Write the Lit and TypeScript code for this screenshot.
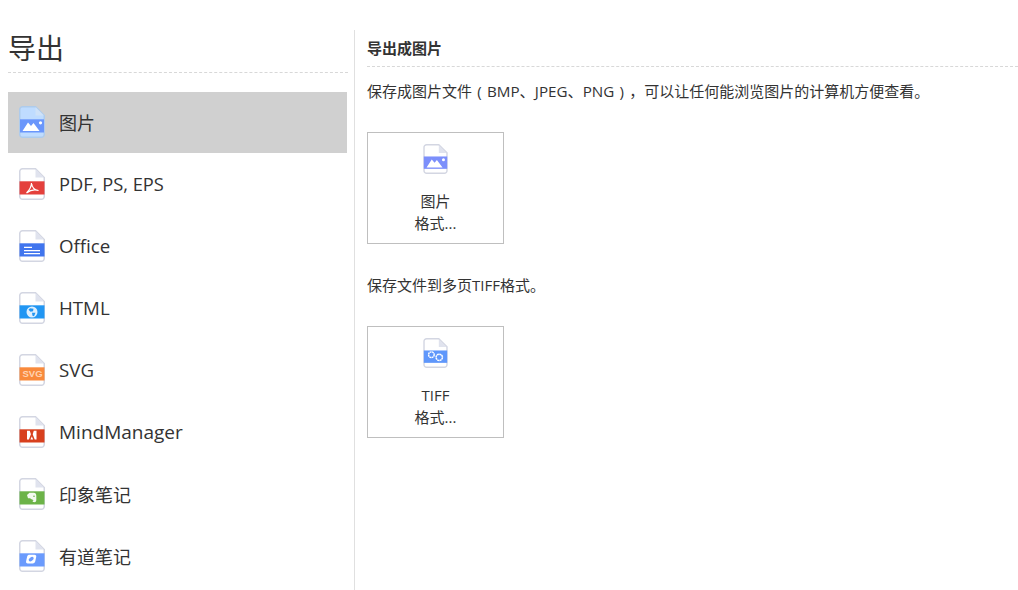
import { LitElement, html, css, svg } from "lit";
import { customElement } from "lit/decorators.js";

const fileIcon = (band: string, glyph: unknown, selected = false, small = false) => html`
  <svg class="icon ${small ? "small" : ""}" viewBox="0 0 26 32">
    <path d="M3.500.75H16.500L25.250 9.500V28.500a2.750 2.750 0 0 1-2.750 2.750H3.500A2.750 2.750 0 0 1 .75 28.500V3.500A2.750 2.750 0 0 1 3.500.75Z"
      fill="${selected ? "#bfdcff" : "#fff"}" stroke="${selected ? "#aecbec" : "#d3d6e2"}" stroke-width="1.500"/>
    <path d="M16.500 1V9.500H25Z" fill="${selected ? "#cfe2f8" : "#e0e3ee"}"/>
    <rect x="${selected ? 1 : 0.5}" y="13.300" width="${selected ? 24 : 25}" height="13.200" fill="${band}"/>
    ${glyph}
  </svg>`;

const picture = svg`<path d="M3.500 25 9 16.500 12 20 14.500 17 20.500 25Z" fill="#fff"/><circle cx="21.500" cy="16.800" r="1.600" fill="#fff"/>`;
const pdf = svg`<path d="M12.500 15c.5 4.500 2.500 7 7 7.500-4-1.200-8-.5-12 2.500 2.500-2.500 5-6 5-10Z" fill="none" stroke="#fff" stroke-width="1.200"/>`;
const office = svg`<path d="M5 16.700h8v1.300H5ZM5 20h16v1.200H5ZM5 23h16v1.200H5Z" fill="#fff"/>`;
const globe = svg`<circle cx="13" cy="20" r="5.500" fill="#fff" fill-opacity=".85"/><path d="M11 16.200 14.500 16.700 14 19.200 11.500 19.700 9.500 17.700ZM13 20.700 16.500 20.700 15 24.200 13.500 23.700Z" fill="#2196f3"/>`;
const svgLabel = svg`<text x="13.500" y="23.400" text-anchor="middle" font-family="Liberation Sans, sans-serif" font-size="9.500" font-weight="700" fill="#ffd3b3">SVG</text>`;
const mind = svg`<path fill-rule="evenodd" d="M8 14.800h9.500v8.700H8ZM10.800 14.800l1.100 3.400-2 5.300h1.500l1.400-3 1.400 3h1.500l-2-5.300 1.100-3.400Z" fill="#fff"/>`;
const evernote = svg`<path d="M8 17 10.500 14.700h4.300c1.500 0 2.500 1 2.500 3v4.300c0 1.800-1.300 2.500-3 2.100-1-.5-.8-1.900.5-1.900-1.500-1-3-.5-3.500-1.900H9Z" fill="#fff" fill-opacity=".92"/><circle cx="15" cy="18.300" r=".8" fill="#6cb348"/>`;
const youdao = svg`<path d="M10.500 14.800h5c1.500 0 2 1 1.700 2.200l-1 4.500c-.4 1.300-1.200 1.900-2.500 1.900h-5c-1.300 0-1.900-.9-1.600-2.200l1-4.500c.4-1.300 1.200-1.900 2.400-1.900Z" fill="#fff"/><ellipse cx="12.200" cy="19.100" rx="2.800" ry="1.800" transform="rotate(-35 12.200 19.100)" fill="#6b9bfd"/>`;
const gears = svg`<g fill="none" stroke="#fff"><circle cx="8.600" cy="17.800" r="3" stroke-width="1.500" stroke-dasharray="2 .4"/><circle cx="17" cy="20.600" r="3.400" stroke-width="1.600" stroke-dasharray="2.200 .4"/></g>`;

const items: { label: string; band: string; glyph: unknown; selected?: boolean; size?: number }[] = [
  { label: "图片", band: "#6a96fb", glyph: picture, selected: true },
  { label: "PDF, PS, EPS", band: "#e4403c", glyph: pdf, size: 18.3 },
  { label: "Office", band: "#4075ee", glyph: office, size: 18.7 },
  { label: "HTML", band: "#2196f3", glyph: globe, size: 18.7 },
  { label: "SVG", band: "#f98a3c", glyph: svgLabel, size: 18.7 },
  { label: "MindManager", band: "#d8401e", glyph: mind, size: 19 },
  { label: "印象笔记", band: "#6cb348", glyph: evernote },
  { label: "有道笔记", band: "#6b9bfd", glyph: youdao },
];

@customElement("app-root")
export class AppRoot extends LitElement {
  static styles = css`
    :host {
      display: flex;
      width: 1018px;
      height: 590px;
      overflow: hidden;
      background: #fff;
      color: #333;
      font-family: "Open Sans", "Noto Sans CJK SC", sans-serif;
    }
    .side {
      width: 339px;
      margin-left: 8px;
      flex: none;
      display: flex;
      flex-direction: column;
    }
    h1 {
      margin: 0;
      box-sizing: border-box;
      padding-top: 30px;
      font-size: 28px;
      line-height: 37px;
      height: 73px;
      font-weight: 400;
      border-bottom: 1px dashed #d8d8d8;
      width: 340px;
    }
    .list {
      margin-top: 19px;
      display: flex;
      flex-direction: column;
    }
    .item {
      height: 62px;
      flex: none;
      box-sizing: border-box;
      display: flex;
      align-items: center;
      gap: 14px;
      padding: 0 0 3px 11px;
      font-size: 18px;
    }
    .item.selected {
      background: #d0d0d0;
      height: 61px;
      margin-bottom: 1px;
      padding-bottom: 1px;
    }
    .icon { flex: none; display: block; width: 26px; height: 32px; }
    .icon.small { width: 25px; height: 30px; }
    .main {
      margin-left: 7px;
      margin-top: 30px;
      border-left: 1px solid #e0e0e0;
      padding-left: 12px;
      flex: 1;
      min-width: 0;
      display: flex;
      flex-direction: column;
      font-size: 15px;
    }
    h2 {
      margin: 0;
      font-size: 15px;
      font-weight: 700;
      line-height: 36px;
      height: 37px;
      box-sizing: border-box;
      border-bottom: 1px dashed #d8d8d8;
    }
    p {
      margin: 0;
      line-height: 20px;
    }
    .first { margin-top: 14px; white-space: nowrap; }
    .second { margin-top: 31px; }
    .paren { display: inline-block; width: 15px; text-align: center; }
    .wide { font-size: 15.200px; }
    .card {
      margin-top: 31px;
      width: 137px;
      height: 112px;
      box-sizing: border-box;
      border: 1px solid #bfbfbf;
      display: flex;
      flex-direction: column;
      align-items: center;
      padding-top: 11px;
      line-height: 22px;
      font-size: 15px;
    }
    .card .name { margin-top: 16px; }
  `;

  render() {
    return html`
      <div class="side">
        <h1>导出</h1>
        <div class="list">
          ${items.map(
            (i) => html`<div class="item ${i.selected ? "selected" : ""}">
              ${fileIcon(i.band, i.glyph, i.selected)}<span style=${i.size ? `font-size:${i.size}px` : ""}>${i.label}</span>
            </div>`
          )}
        </div>
      </div>
      <div class="main">
        <h2>导出成图片</h2>
        <p class="first">保存成图片文件<span class="paren">(</span><span class="wide">BMP、JPEG、PNG</span><span class="paren">)</span>，可以让任何能浏览图片的计算机方便查看。</p>
        <div class="card">
          ${fileIcon("#7c8ffb", picture, false, true)}
          <span class="name">图片</span><span>格式...</span>
        </div>
        <p class="second">保存文件到多页TIFF格式。</p>
        <div class="card">
          ${fileIcon("#5f97fb", gears, false, true)}
          <span class="name">TIFF</span><span>格式...</span>
        </div>
      </div>
    `;
  }
}
